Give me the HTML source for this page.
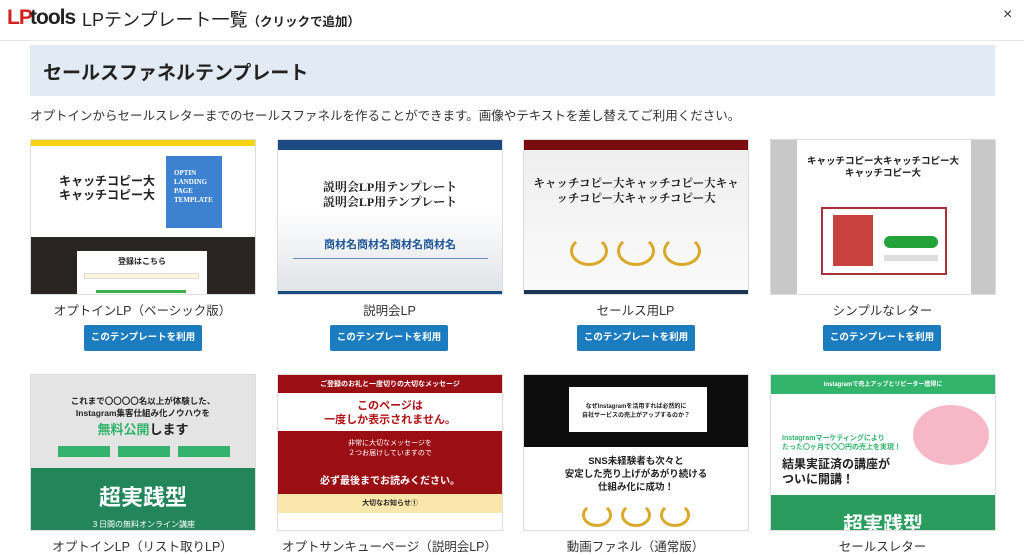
<!DOCTYPE html>
<html><head><meta charset="utf-8"><style>
*{margin:0;padding:0;box-sizing:border-box}
body{width:1024px;height:553px;overflow:hidden;background:#fff;font-family:"Liberation Sans","Noto Sans CJK JP",sans-serif;color:#333;position:relative}
.a{position:absolute}
.t{position:absolute;overflow:hidden;border:1px solid #ddd}
.lbl{position:absolute;width:225px;text-align:center;font-size:12.5px;color:#333}
.btn{position:absolute;width:118px;height:26px;background:#1b7cbf;color:#fff;font-size:9.5px;font-weight:bold;text-align:center;line-height:26px;border-radius:2px;white-space:nowrap}
.c{text-align:center;width:100%;left:0}
.b{font-weight:bold}
</style></head><body>
<div class="a" style="left:7px;top:6px;font-size:21px;font-weight:900;color:#d2231f;letter-spacing:-1px">LP</div>
<div class="a" style="left:30px;top:6px;font-size:21px;font-weight:900;color:#222;letter-spacing:-1px">tools</div>
<div class="a" style="left:82px;top:6px;font-size:18px;color:#222">LPテンプレート一覧<span style="font-size:12.5px;font-weight:bold">（クリックで追加）</span></div>
<div class="a" style="left:1003px;top:6px;font-size:16px;color:#333">×</div>
<div class="a" style="left:0;top:40px;width:1024px;height:1px;background:#e6e6e6"></div>
<div class="a" style="left:30px;top:45px;width:965px;height:51px;background:#e2ebf3"></div>
<div class="a b" style="left:43px;top:58px;font-size:19px;color:#222">セールスファネルテンプレート</div>
<div class="a" style="left:30px;top:105px;font-size:12.5px;color:#333">オプトインからセールスレターまでのセールスファネルを作ることができます。画像やテキストを差し替えてご利用ください。</div>

<!-- row1 -->
<div class="t" style="left:30px;top:139px;width:226px;height:156px;background:#fff">
 <div class="a" style="left:0;top:0;width:226px;height:6px;background:#f5d414"></div>
 <div class="a b" style="left:28px;top:34px;font-size:12px;color:#222;line-height:14px">キャッチコピー大<br>キャッチコピー大</div>
 <div class="a" style="left:135px;top:16px;width:56px;height:72px;background:#3c82d0;color:#fff;font-family:'Liberation Serif',serif;font-size:7px;font-weight:bold;padding:13px 8px;line-height:9px">OPTIN<br>LANDING<br>PAGE<br>TEMPLATE</div>
 <div class="a" style="left:0;top:97px;width:226px;height:59px;background:#2a2523"></div>
 <div class="a" style="left:46px;top:111px;width:130px;height:45px;background:#fff"></div>
 <div class="a b" style="left:46px;top:116px;width:130px;text-align:center;font-size:8px;color:#222">登録はこちら</div>
 <div class="a" style="left:53px;top:133px;width:115px;height:6px;background:#fdf6dc;border:1px solid #ddd"></div>
 <div class="a" style="left:65px;top:150px;width:90px;height:3px;background:#3bb34a"></div>
</div>
<div class="t" style="left:277px;top:139px;width:226px;height:156px;background:linear-gradient(#fff 45%,#dfe2e6)">
 <div class="a" style="left:0;top:0;width:226px;height:10px;background:#1d4a82"></div>
 <div class="a c b" style="top:40px;font-family:'Liberation Serif','Noto Serif CJK SC',serif;font-size:12px;line-height:15px;color:#222">説明会LP用テンプレート<br>説明会LP用テンプレート</div>
 <div class="a c b" style="top:96px;font-size:11px;color:#1f5596">商材名商材名商材名商材名</div>
 <div class="a" style="left:15px;top:118px;width:195px;height:1px;background:#6c8fb7"></div>
 <div class="a" style="left:0;top:151px;width:226px;height:5px;background:#1d4a82"></div>
</div>
<div class="t" style="left:523px;top:139px;width:226px;height:156px;background:linear-gradient(#eee,#fafafa)">
 <div class="a" style="left:0;top:0;width:226px;height:10px;background:#7a0c10"></div>
 <div class="a c b" style="top:37px;font-family:'Liberation Serif','Noto Serif CJK SC',serif;font-size:11.5px;line-height:15px;color:#222">キャッチコピー大キャッチコピー大キャ<br>ッチコピー大キャッチコピー大</div>
 <div class="a" style="left:46px;top:96px;width:38px;height:30px;border:3px solid #d9a92a;border-radius:50%;border-top-color:transparent"></div>
 <div class="a" style="left:93px;top:96px;width:38px;height:30px;border:3px solid #d9a92a;border-radius:50%;border-top-color:transparent"></div>
 <div class="a" style="left:139px;top:96px;width:38px;height:30px;border:3px solid #d9a92a;border-radius:50%;border-top-color:transparent"></div>
 <div class="a" style="left:0;top:150px;width:226px;height:6px;background:#1b3552"></div>
</div>
<div class="t" style="left:770px;top:139px;width:226px;height:156px;background:#fff">
 <div class="a" style="left:0;top:0;width:26px;height:156px;background:#c8c8c8"></div>
 <div class="a" style="left:200px;top:0;width:26px;height:156px;background:#c8c8c8"></div>
 <div class="a c b" style="top:16px;font-size:9.5px;line-height:12px;color:#222">キャッチコピー大キャッチコピー大<br>キャッチコピー大</div>
 <div class="a" style="left:50px;top:67px;width:126px;height:68px;border:2px solid #a8333a"></div>
 <div class="a" style="left:62px;top:75px;width:40px;height:51px;background:#c9413f"></div>
 <div class="a" style="left:113px;top:96px;width:54px;height:12px;background:#21a33a;border-radius:6px"></div>
 <div class="a" style="left:113px;top:115px;width:54px;height:6px;background:#ddd"></div>
</div>
<div class="lbl" style="left:30px;top:300px">オプトインLP（ベーシック版）</div>
<div class="lbl" style="left:277px;top:300px">説明会LP</div>
<div class="lbl" style="left:523px;top:300px">セールス用LP</div>
<div class="lbl" style="left:770px;top:300px">シンプルなレター</div>
<div class="btn" style="left:84px;top:325px">このテンプレートを利用</div>
<div class="btn" style="left:330px;top:325px">このテンプレートを利用</div>
<div class="btn" style="left:577px;top:325px">このテンプレートを利用</div>
<div class="btn" style="left:823px;top:325px">このテンプレートを利用</div>

<!-- row2 -->
<div class="t" style="left:30px;top:374px;width:226px;height:157px;background:#e4e4e4">
 <div class="a c b" style="top:20px;font-size:8.5px;line-height:12px;color:#222">これまで〇〇〇〇名以上が体験した、<br>Instagram集客仕組み化ノウハウを</div>
 <div class="a c b" style="top:44px;font-size:13px;color:#222"><span style="color:#2fb36a">無料公開</span>します</div>
 <div class="a" style="left:27px;top:71px;width:52px;height:11px;background:#34b36f"></div>
 <div class="a" style="left:87px;top:71px;width:52px;height:11px;background:#34b36f"></div>
 <div class="a" style="left:147px;top:71px;width:52px;height:11px;background:#34b36f"></div>
 <div class="a" style="left:0;top:93px;width:226px;height:64px;background:#22865a"></div>
 <div class="a c b" style="top:105px;font-size:22px;color:#fff">超実践型</div>
 <div class="a c" style="top:144px;font-size:8px;color:#fff">３日間の無料オンライン講座</div>
</div>
<div class="t" style="left:277px;top:374px;width:226px;height:157px;background:#fff">
 <div class="a" style="left:0;top:0;width:226px;height:18px;background:#9b0e14"></div>
 <div class="a c b" style="top:4px;font-size:7px;color:#fff">ご登録のお礼と一度切りの大切なメッセージ</div>
 <div class="a c b" style="top:24px;font-size:11px;line-height:14px;color:#b01218">このページは<br>一度しか表示されません。</div>
 <div class="a" style="left:0;top:56px;width:226px;height:63px;background:#9b0e14"></div>
 <div class="a c" style="top:64px;font-size:7px;line-height:10px;color:#fff">非常に大切なメッセージを<br>２つお届けしていますので</div>
 <div class="a c b" style="top:97px;font-size:10px;color:#fff">必ず最後までお読みください。</div>
 <div class="a" style="left:0;top:119px;width:226px;height:19px;background:#fbe6ac"></div>
 <div class="a c b" style="top:123px;font-size:7px;color:#222">大切なお知らせ①</div>
</div>
<div class="t" style="left:523px;top:374px;width:226px;height:157px;background:#fff">
 <div class="a" style="left:0;top:0;width:226px;height:72px;background:#0d0d0d"></div>
 <div class="a" style="left:45px;top:12px;width:138px;height:45px;background:#fff"></div>
 <div class="a c b" style="top:28px;font-size:6px;line-height:9px;color:#222">なぜInstagramを活用すれば必然的に<br>自社サービスの売上がアップするのか？</div>
 <div class="a c b" style="top:80px;font-size:9.5px;line-height:13px;color:#222">SNS未経験者も次々と<br>安定した売り上げがあがり続ける<br>仕組み化に成功！</div>
 <div class="a" style="left:58px;top:128px;width:30px;height:24px;border:3px solid #d9a92a;border-radius:50%;border-top-color:transparent"></div>
 <div class="a" style="left:97px;top:128px;width:30px;height:24px;border:3px solid #d9a92a;border-radius:50%;border-top-color:transparent"></div>
 <div class="a" style="left:136px;top:128px;width:30px;height:24px;border:3px solid #d9a92a;border-radius:50%;border-top-color:transparent"></div>
</div>
<div class="t" style="left:770px;top:374px;width:226px;height:157px;background:#fff">
 <div class="a" style="left:0;top:0;width:226px;height:19px;background:#33b46d"></div>
 <div class="a c b" style="top:4px;font-size:6px;color:#fff">Instagramで売上アップとリピーター獲得に</div>
 <div class="a b" style="left:11px;top:59px;font-size:7px;color:#2fb36a;line-height:9px">Instagramマーケティングにより<br>たった〇ヶ月で〇〇円の売上を実現！</div>
 <div class="a b" style="left:11px;top:82px;font-size:12px;line-height:15px;color:#222">結果実証済の講座が<br>ついに開講！</div>
 <div class="a" style="left:142px;top:30px;width:76px;height:60px;background:#f6b7c6;border-radius:50%"></div>
 <div class="a" style="left:0;top:120px;width:226px;height:37px;background:#2a9d5e"></div>
 <div class="a c b" style="top:133px;font-size:20px;color:#fff">超実践型</div>
</div>
<div class="lbl" style="left:30px;top:536px">オプトインLP（リスト取りLP）</div>
<div class="lbl" style="left:277px;top:536px">オプトサンキューページ（説明会LP）</div>
<div class="lbl" style="left:523px;top:536px">動画ファネル（通常版）</div>
<div class="lbl" style="left:770px;top:536px">セールスレター</div>
</body></html>
